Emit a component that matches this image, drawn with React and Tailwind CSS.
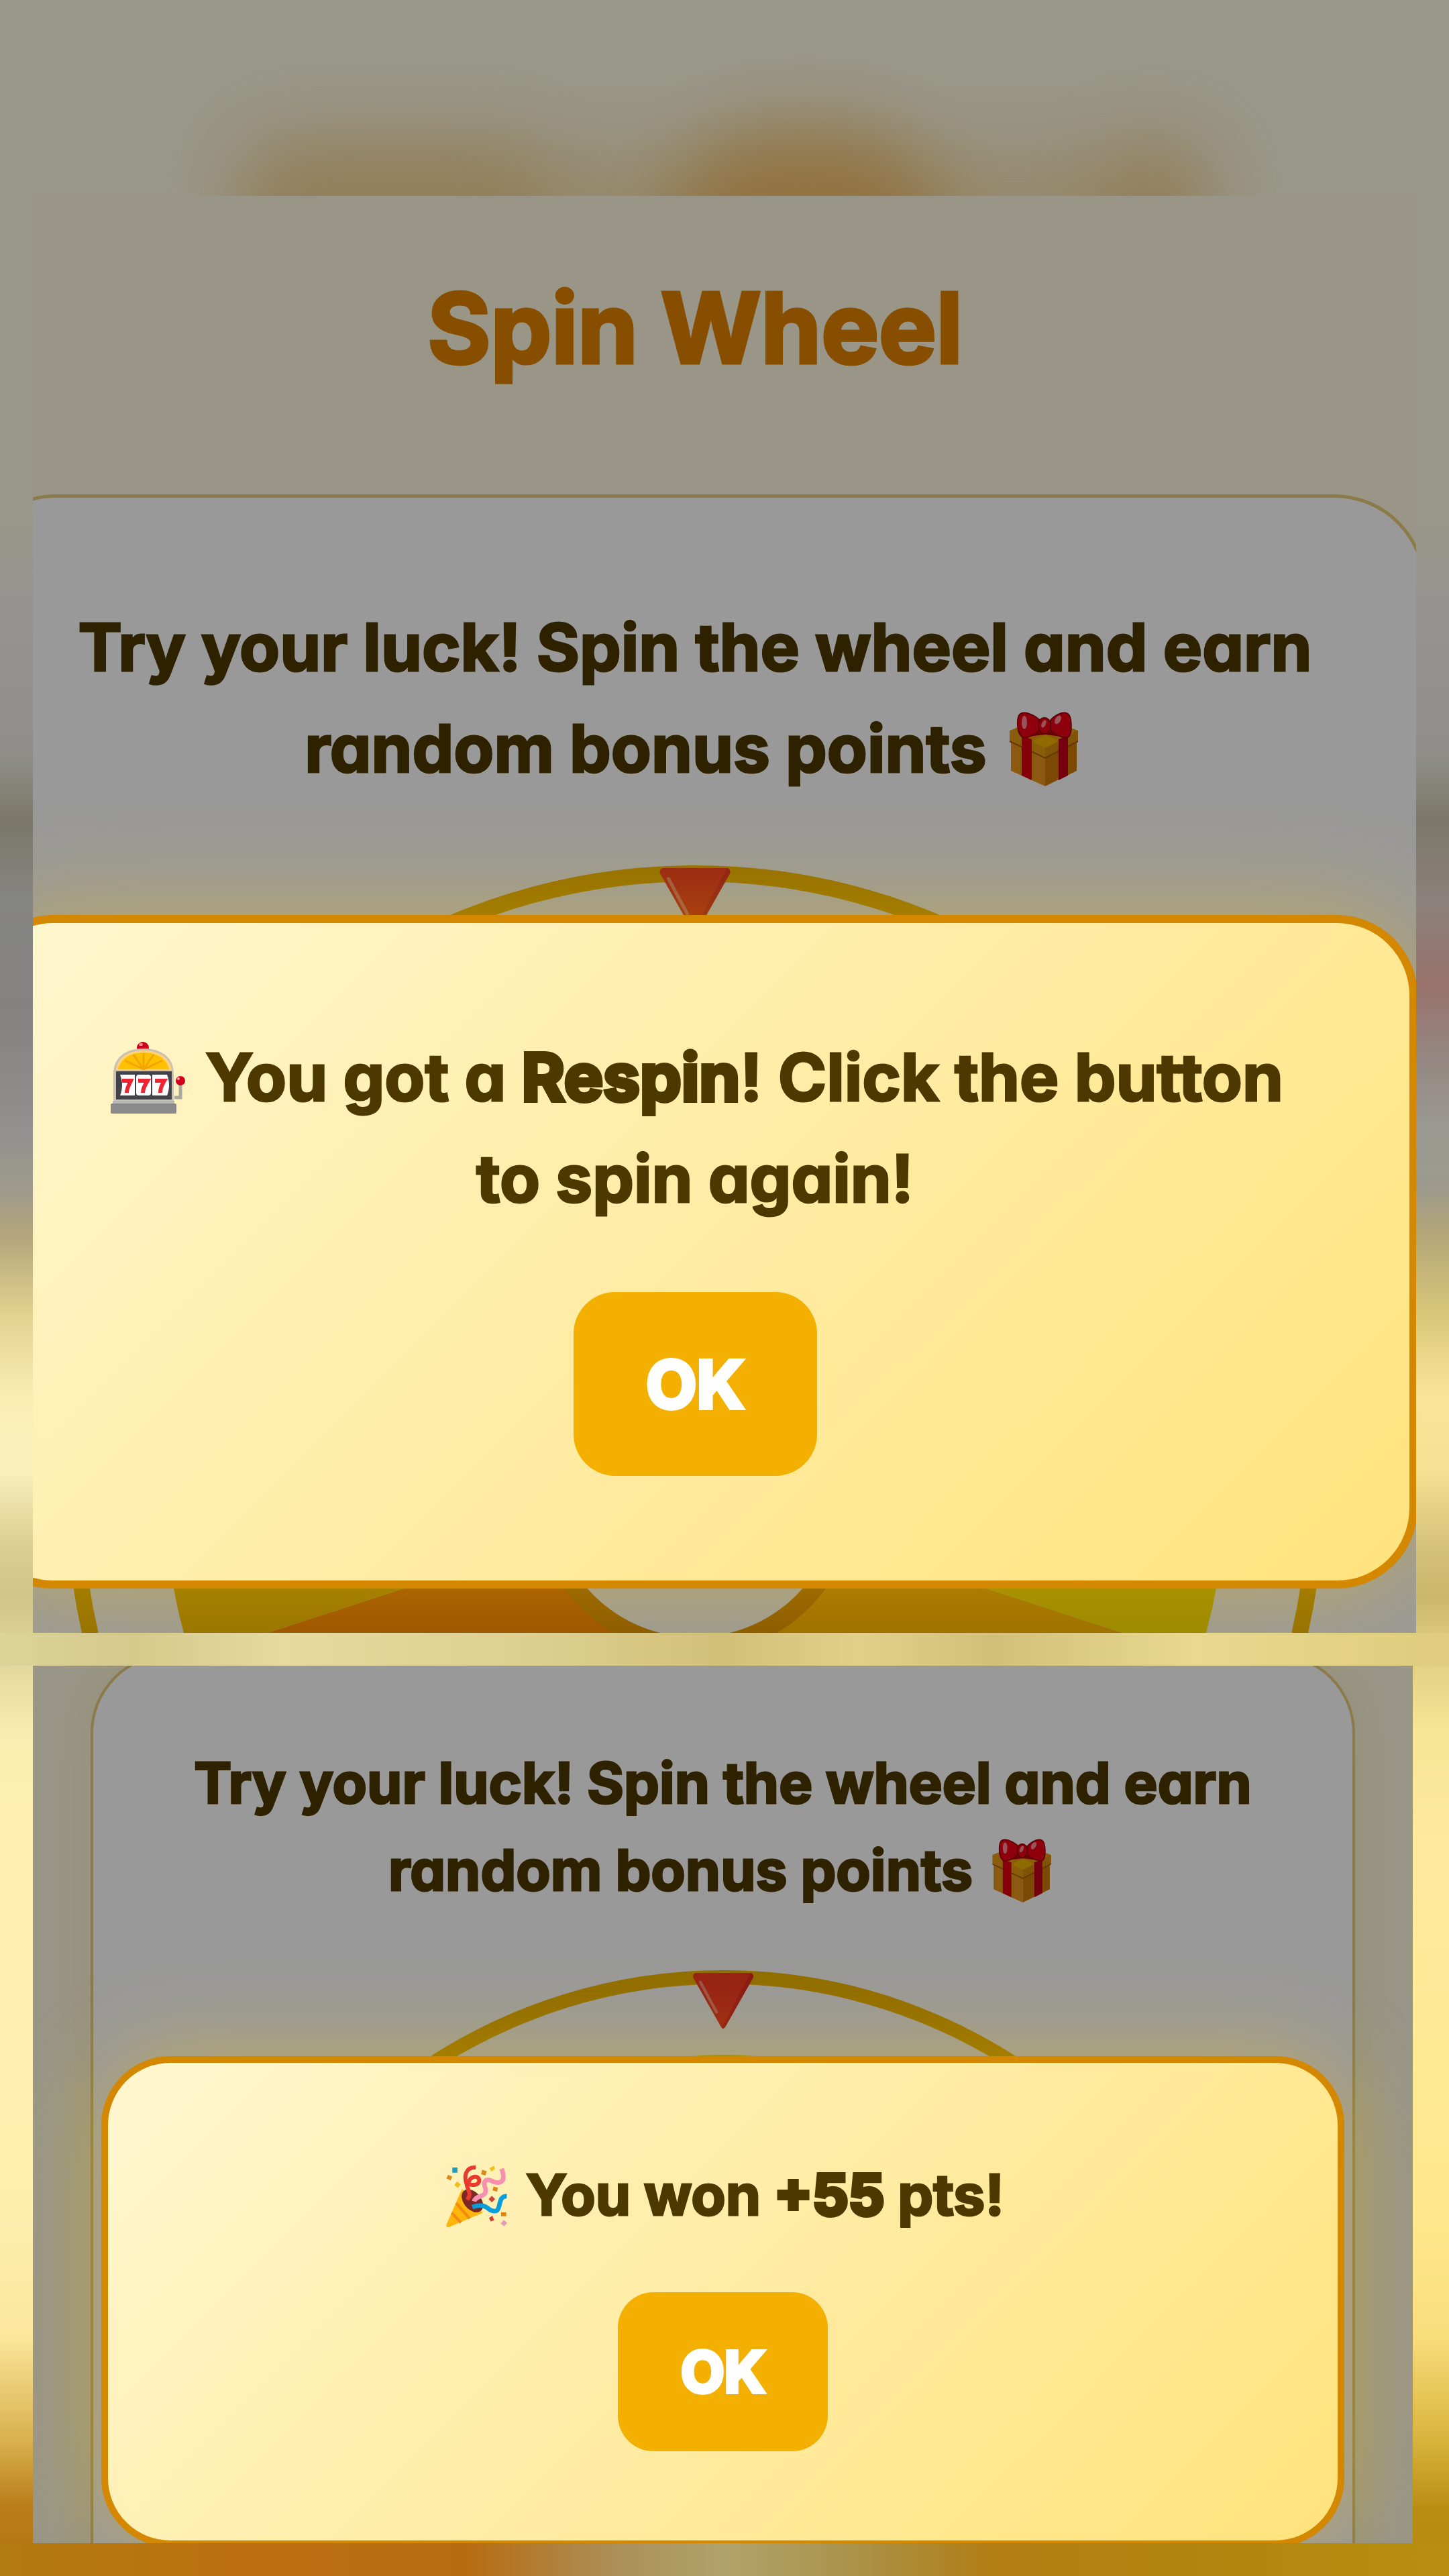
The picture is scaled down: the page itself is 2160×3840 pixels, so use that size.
import React, { useState } from 'react'

const fontClass = "font-['Inter','Lato',sans-serif] [font-feature-settings:'cv11'] font-bold text-center [-webkit-text-stroke:3px_currentColor]";

function GiftIcon({ className }) {
  return (
    <svg viewBox="0 0 124 124" className={className} aria-hidden="true">
      <path d="M13 46 L64 70 L64 117 L13 94 Z" fill="#e8951c" />
      <path d="M111 46 L64 70 L64 117 L111 94 Z" fill="#cf7a08" />
      <path d="M11 34 L62 14 L113 34 L113 50 L64 75 L11 50 Z" fill="#e79c16" />
      <path d="M113 34 L113 50 L64 75 L64 58 Z" fill="#d88a10" />
      <path d="M45 50 L64 40 L84 50 L64 60 Z" fill="#f0b400" />
      <path d="M11 50 L64 75 L113 50" fill="none" stroke="#a85c08" strokeWidth="2" />
      <path d="M29 42 L44 47 L44 108 L29 101 Z" fill="#e0000f" />
      <path d="M84 47 L98 42 L98 101 L84 108 Z" fill="#c00014" />
      <path d="M30 40 L64 34 L97 40 L97 44 L64 40 L30 44 Z" fill="#b3000f" />
      <path d="M55 34 C46 42 33 48 28 42 C22 36 21 14 27 9 C35 4 51 13 56 19 Z" fill="#ee0016" stroke="#a00010" strokeWidth="2" />
      <path d="M72 34 C82 42 96 48 100 42 C104 36 104 14 98 9 C90 4 76 13 72 19 Z" fill="#ee0016" stroke="#a00010" strokeWidth="2" />
      <ellipse cx="63" cy="27" rx="9" ry="12" fill="#ee0016" stroke="#a00010" strokeWidth="2" />
      <ellipse cx="33" cy="22" rx="4" ry="10" fill="#ff8d96" />
      <ellipse cx="62" cy="24" rx="3" ry="6" fill="#ff8d96" transform="rotate(25 62 24)" />
      <ellipse cx="83" cy="18" rx="4" ry="7" fill="#ff8d96" transform="rotate(30 83 18)" />
    </svg>
  )
}

function SlotIcon({ className }) {
  return (
    <svg viewBox="0 0 124 124" className={className} aria-hidden="true">
      <circle cx="54" cy="17" r="9" fill="#cf0018" />
      <ellipse cx="51" cy="12" rx="3" ry="2" fill="#f08a92" />
      <path d="M10 98 V56 C10 30 30 18 55 18 C80 18 100 30 100 56 V98 Z" fill="#c9c2b4" />
      <path d="M14 50 C16 30 34 21 55 21 C77 21 94 31 97 50 Z" fill="#ffd37a" />
      <path d="M17 49 C21 32 37 24 55 24 C74 24 89 32 93 49 Z" fill="#ffc000" />
      <path d="M55 49 V25 M55 49 L40 27 M55 49 L70 27 M55 49 L27 36 M55 49 L83 36" stroke="#f2a500" strokeWidth="3" />
      <rect x="14" y="52" width="83" height="42" fill="#42424a" />
      <path d="M20 57 H42 V88 H20 C24 78 24 67 20 57 Z" fill="#fff" />
      <rect x="44" y="57" width="22" height="31" rx="4" fill="#fff" />
      <path d="M90 57 H68 V88 H90 C94 78 94 67 90 57 Z" fill="#fff" />
      <g fill="none" stroke="#ee2430" strokeWidth="6">
        <path d="M23 66 H36 C33 73 30 77 30 84" />
        <path d="M47 66 H61 C57 73 54 77 54 84" />
        <path d="M72 66 H86 C82 73 80 77 80 84" />
      </g>
      <path d="M101 91 H110 V70" fill="none" stroke="#aaa79c" strokeWidth="5" />
      <circle cx="110" cy="66" r="7" fill="#d4001c" />
      <circle cx="107" cy="63" r="2" fill="#f8a0a6" />
      <rect x="9" y="96" width="92" height="6" fill="#b5b5b5" />
      <rect x="6" y="100" width="98" height="15" rx="2" fill="#8a8a8a" />
    </svg>
  )
}

function PartyIcon({ className }) {
  return (
    <svg viewBox="0 0 124 124" className={className} aria-hidden="true">
      <path d="M36 50 L72 92 L13 117 C9 118 8 115 9 112 Z" fill="#ffb60a" />
      <path d="M26 75 L49 102 M18 92 L34 109" stroke="#f08c10" strokeWidth="5" />
      <ellipse cx="54" cy="71" rx="15" ry="23" transform="rotate(-40 54 71)" fill="#7a2a22" />
      <path d="M45 69 C54 58 45 52 44 42 C39 28 42 12 60 13 M44 38 C50 46 66 45 66 35 C64 25 50 28 47 40" fill="none" stroke="#ea3a30" strokeWidth="7" />
      <path d="M57 72 C60 60 80 66 77 50 C72 38 76 32 87 36 C101 43 114 40 105 15" fill="none" stroke="#f78fb0" strokeWidth="8" />
      <path d="M54 82 C70 76 77 80 85 87 C109 98 94 62 114 63" fill="none" stroke="#0a9fdc" strokeWidth="8" />
      <rect x="19" y="13" width="9" height="9" fill="#1fa0c0" />
      <rect x="10" y="27" width="8" height="7" fill="#dc8a18" transform="rotate(25 14 30)" />
      <rect x="24" y="39" width="8" height="8" fill="#f2bd1a" transform="rotate(40 28 43)" />
      <rect x="70" y="18" width="8" height="8" fill="#dc8a18" transform="rotate(15 74 22)" />
      <path d="M84 14 L92 10 L93 16 L87 20 Z" fill="#f2bd1a" />
      <rect x="90" y="47" width="8" height="7" fill="#d88414" transform="rotate(15 94 50)" />
      <rect x="84" y="64" width="8" height="8" fill="#cc4236" transform="rotate(45 88 68)" />
      <rect x="104" y="91" width="9" height="7" fill="#e0860c" />
      <path d="M83 101 L89 97 L92 105 L86 107 Z" fill="#cc4236" />
      <rect x="105" y="106" width="8" height="8" fill="#e79ab4" transform="rotate(40 109 110)" />
    </svg>
  )
}

function Pointer({ className }) {
  return (
    <svg viewBox="0 0 107 97" className={className} aria-hidden="true">
      <path d="M6 0 H101 Q108 2 105 9 L57 94 Q53 99 50 94 L2 9 Q-1 2 6 0 Z" fill="#fb3a22" />
      <path d="M101 0 Q108 2 105 9 L57 94 Q54 98 51 95 Z" fill="#e52c22" />
      <path d="M14 16 L42 68" stroke="#ff8a78" strokeWidth="5" strokeLinecap="round" />
    </svg>
  )
}

function Wheel({ className }) {
  return (
    <svg viewBox="0 0 1874 1874" className={className} aria-hidden="true">
      <circle cx="937" cy="937" r="925" fill="#fff" stroke="#f2b600" strokeWidth="24" />
      {/* segments, 36 degrees each */}
      <path d="M937 937 L693 1688 A790 790 0 0 1 186 1181 Z" fill="#ff8400" />
      <path d="M937 937 L186 1181 A790 790 0 0 1 186 693 Z" fill="#f7bd00" />
      <path d="M937 937 L186 693 A790 790 0 0 1 473 298 Z" fill="#ff9a00" />
      <path d="M937 937 L473 298 A790 790 0 0 1 937 147 Z" fill="#f0d800" />
      <path d="M937 937 L937 147 A790 790 0 0 1 1401 298 Z" fill="#f0d800" />
      <path d="M937 937 L1401 298 A790 790 0 0 1 1688 693 Z" fill="#ff9a00" />
      <path d="M937 937 L1688 693 A790 790 0 0 1 1688 1181 Z" fill="#fce000" />
      <path d="M937 937 L1688 1181 A790 790 0 0 1 1181 1688 Z" fill="#ffb400" />
      <path d="M937 937 L1181 1688 A790 790 0 0 1 693 1688 Z" fill="#ffd000" />
      <circle cx="937" cy="937" r="227" fill="#fff" stroke="#e29000" strokeWidth="27" />
    </svg>
  )
}

// blurred colour wash that shows around the two panels
function Backdrop() {
  return (
    <div className="absolute inset-0 overflow-hidden">
      <div className="flex h-full">
        <div className="flex-1 bg-[linear-gradient(180deg,#999788_0px,#999788_760px,#959491_900px,#908e8a_1120px,#7b7869_1225px,#858583_1345px,#848280_1500px,#93918f_1690px,#9d9a8c_1770px,#b3a57c_1840px,#e3d18f_1960px,#faedb4_2080px,#fbf0bc_2190px,#d9cd91_2310px,#d2c589_2380px,#ded398_2460px,#faecb0_2580px,#ffefb1_2760px,#feeeae_3300px,#fbe79c_3480px,#d8b04c_3640px,#b87b17_3740px,#b27612_3840px)]"></div>
        <div className="flex-1 bg-[linear-gradient(180deg,#999788_0px,#999788_760px,#959491_900px,#908e8a_1120px,#7b7869_1225px,#8c807c_1345px,#98736b_1470px,#958a84_1590px,#9b9992_1680px,#9d9a8c_1770px,#b3a678_1840px,#d9c779_1960px,#f8e59a_2080px,#f5e193_2190px,#d4c178_2310px,#cbb86b_2380px,#dfcd80_2460px,#f7e596_2580px,#fdea9d_2760px,#fee78d_3300px,#f9de7c_3480px,#d9b23c_3640px,#b88e12_3740px,#b6890e_3840px)]"></div>
      </div>
      <div className="absolute inset-x-0 top-0 h-[292px] overflow-hidden">
        <div className="absolute left-[350px] top-[220px] h-[260px] w-[1450px] rounded-[60px] bg-[#94805c] opacity-60 blur-[55px]"></div>
        <div className="absolute left-[370px] top-[210px] h-[260px] w-[440px] rounded-[60px] bg-[#8d6f3c] opacity-40 blur-[55px]"></div>
        <div className="absolute left-[1000px] top-[190px] h-[300px] w-[400px] rounded-full bg-[#8f6524] opacity-60 blur-[55px]"></div>
        <div className="absolute left-[1640px] top-[210px] h-[260px] w-[160px] rounded-[60px] bg-[#8f7140] opacity-40 blur-[55px]"></div>
      </div>
      <div className="absolute inset-x-0 top-[2434px] h-[49px] bg-[linear-gradient(90deg,#ddd399,#d5c98c_200px,#e6da9f_420px,#dccf90_800px,#d2c078_1080px,#e2d088_1280px,#d2c079_1480px,#e9d88e_1780px,#dfcc7e_2160px)]"></div>
      <div className="absolute inset-x-0 bottom-0 h-[49px] bg-[linear-gradient(90deg,#b37c13,#bb6f10_330px,#b86c12_700px,#ab905a_920px,#b1a26b_1080px,#aa944c_1260px,#b17d14_1480px,#b1850f_1800px,#b88f10_2160px)]"></div>
    </div>
  )
}

const modalClass = "border-[#d48700] bg-[linear-gradient(135deg,#fff7d0,#ffefb0_35%,#ffe37c)] text-[#4d3800] flex flex-col items-center";
const strongClass = "font-bold [-webkit-text-stroke:6px_currentColor]";
const buttonClass = "bg-[#f4b000] text-white font-bold [-webkit-text-stroke:6px_currentColor]";

function App() {
  const [respinOpen, setRespinOpen] = useState(true);
  const [wonOpen, setWonOpen] = useState(true);

  return (
    <div className={`relative h-screen ${fontClass}`}>
      <Backdrop />
      <main className="relative grid h-full grid-rows-[2142fr_1308fr] gap-[49px] pt-[292px] pb-[49px] pl-[49px]">

        {/* Respin */}
        <section className="relative mr-[49px] overflow-hidden bg-[#fffbe3]">
          <div className="-ml-[103px] -mr-[15px]">
            <h1 className="pt-[107px] text-[144px] leading-[180px] text-[#e18200] [-webkit-text-stroke:5px_currentColor]">Spin Wheel</h1>
            <div className="mt-[158px] rounded-[137px] border-[5px] border-[#e8cb7c] bg-white pt-[147px] pb-[148px]">
              <p className="text-[98px] leading-[151px] text-[#4d3800]">
                Try your luck! Spin the wheel and earn<br />
                random bonus points <GiftIcon className="inline-block size-[124px] align-[-28px]" />
              </p>
              <div className="relative mt-[99px]">
                <Wheel className="mx-auto w-[1874px]" />
                <Pointer className="absolute left-1/2 top-1 w-[107px] -translate-x-1/2" />
              </div>
            </div>
          </div>
          {respinOpen && (
            <div className="absolute inset-0 bg-black/40 pt-[1072px]">
              <div role="dialog" className={`-ml-[90px] -mr-[2px] rounded-[120px] border-[12px] pt-[154px] pb-[156px] shadow-[0_0_160px_rgba(255,204,0,0.36)] ${modalClass}`}>
                <p className="text-[98px] leading-[151px]">
                  <SlotIcon className="inline-block size-[124px] align-[-28px]" /> You got a <strong className={strongClass}>Respin</strong>! Click the button<br />
                  to spin again!
                </p>
                <button type="button" onClick={() => setRespinOpen(false)} className={`mt-[94px] h-[274px] w-[363px] rounded-[62px] text-[98px] ${buttonClass}`}>OK</button>
              </div>
            </div>
          )}
        </section>

        {/* Points won */}
        <section className="relative mr-[54px] overflow-hidden bg-[#fffbe3]">
          <div className="mx-[86px] -mt-[18px] rounded-[118px] border-4 border-[#e8cb7c] bg-white pt-[124px] pb-[124px] shadow-[0_0_80px_rgba(230,190,60,0.2)]">
            <p className="text-[84px] leading-[130px] text-[#4d3800]">
              Try your luck! Spin the wheel and earn<br />
              random bonus points <GiftIcon className="inline-block size-[106px] align-[-24px]" />
            </p>
            <div className="relative mt-[84px]">
              <Wheel className="mx-auto w-[1610px]" />
              <Pointer className="absolute left-1/2 top-1 w-[92px] -translate-x-1/2" />
            </div>
          </div>
          {wonOpen && (
            <div className="absolute inset-0 bg-black/40 pt-[582px]">
              <div role="dialog" className={`mx-[102px] rounded-[103px] border-[10px] pt-[132px] pb-[133px] shadow-[0_0_137px_rgba(255,204,0,0.36)] ${modalClass}`}>
                <p className="text-[84px] leading-[130px]">
                  <PartyIcon className="inline-block size-[106px] align-[-24px]" /> You won <strong className={strongClass}>+55</strong> pts!
                </p>
                <button type="button" onClick={() => setWonOpen(false)} className={`mt-[80px] h-[237px] w-[313px] rounded-[53px] text-[84px] ${buttonClass}`}>OK</button>
              </div>
            </div>
          )}
        </section>
      </main>
    </div>
  )
}

export default App
